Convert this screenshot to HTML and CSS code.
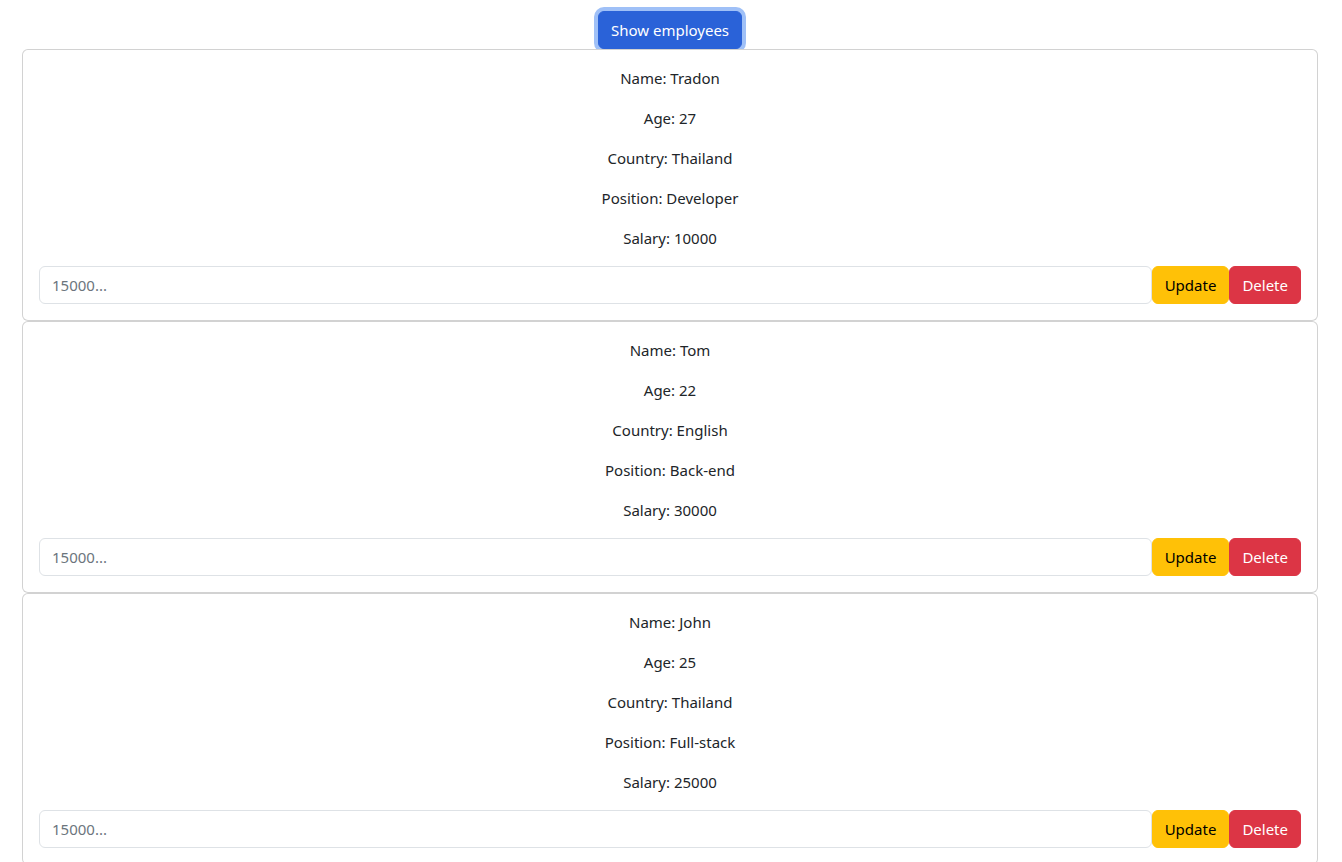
FILE: index.html
```html
<!DOCTYPE html>
<html lang="en">
<head>
<meta charset="utf-8">
<title>Employees</title>
<link rel="stylesheet" href="styles.css">
</head>
<body>
<div class="page">
  <div class="toolbar">
    <button class="btn btn-show" type="button">Show employees</button>
  </div>
  <div class="list">
    <div class="card">
      <p>Name: Tradon</p>
      <p>Age: 27</p>
      <p>Country: Thailand</p>
      <p>Position: Developer</p>
      <p>Salary: 10000</p>
      <div class="edit-row">
        <input class="salary-input" type="text" placeholder="15000...">
        <button class="btn btn-update" type="button">Update</button>
        <button class="btn btn-delete" type="button">Delete</button>
      </div>
    </div>
    <div class="card">
      <p>Name: Tom</p>
      <p>Age: 22</p>
      <p>Country: English</p>
      <p>Position: Back-end</p>
      <p>Salary: 30000</p>
      <div class="edit-row">
        <input class="salary-input" type="text" placeholder="15000...">
        <button class="btn btn-update" type="button">Update</button>
        <button class="btn btn-delete" type="button">Delete</button>
      </div>
    </div>
    <div class="card">
      <p>Name: John</p>
      <p>Age: 25</p>
      <p>Country: Thailand</p>
      <p>Position: Full-stack</p>
      <p>Salary: 25000</p>
      <div class="edit-row">
        <input class="salary-input" type="text" placeholder="15000...">
        <button class="btn btn-update" type="button">Update</button>
        <button class="btn btn-delete" type="button">Delete</button>
      </div>
    </div>
  </div>
</div>
</body>
</html>
```

FILE: styles.css
```css
* { box-sizing: border-box; }
body {
  margin: 0;
  font-family: "Noto Sans", "Open Sans", sans-serif;
  font-size: 15px;
  line-height: 24px;
  color: #212529;
  background: #fff;
}
.page {
  padding: 11px 24px 0 22px;
}
.toolbar {
  display: flex;
  justify-content: center;
}
.btn {
  font-family: inherit;
  font-size: 15px;
  line-height: 24px;
  padding: 6px 12px;
  border: 1px solid transparent;
  border-radius: 6px;
  cursor: pointer;
}
.btn-show {
  background: #2a62d8;
  border-color: #2a62d8;
  color: #fff;
  box-shadow: 0 0 0 4px #9fc0f7;
}
.card {
  position: relative;
  background: #fff;
  border: 1px solid rgba(0, 0, 0, 0.175);
  border-radius: 6px;
  padding: 16px;
  text-align: center;
}
.card p {
  margin: 0 0 16px 0;
}
.edit-row {
  display: flex;
}
.salary-input {
  flex: 1;
  min-width: 0;
  height: 38px;
  padding: 6px 12px;
  font-family: inherit;
  font-size: 15px;
  line-height: 24px;
  color: #212529;
  border: 1px solid #dee2e6;
  border-radius: 6px;
  outline: none;
}
.salary-input::placeholder {
  color: #6c757d;
}
.btn-update {
  background: #ffc107;
  border-color: #ffc107;
  color: #000;
}
.btn-delete {
  background: #dc3545;
  border-color: #dc3545;
  color: #fff;
}
```
